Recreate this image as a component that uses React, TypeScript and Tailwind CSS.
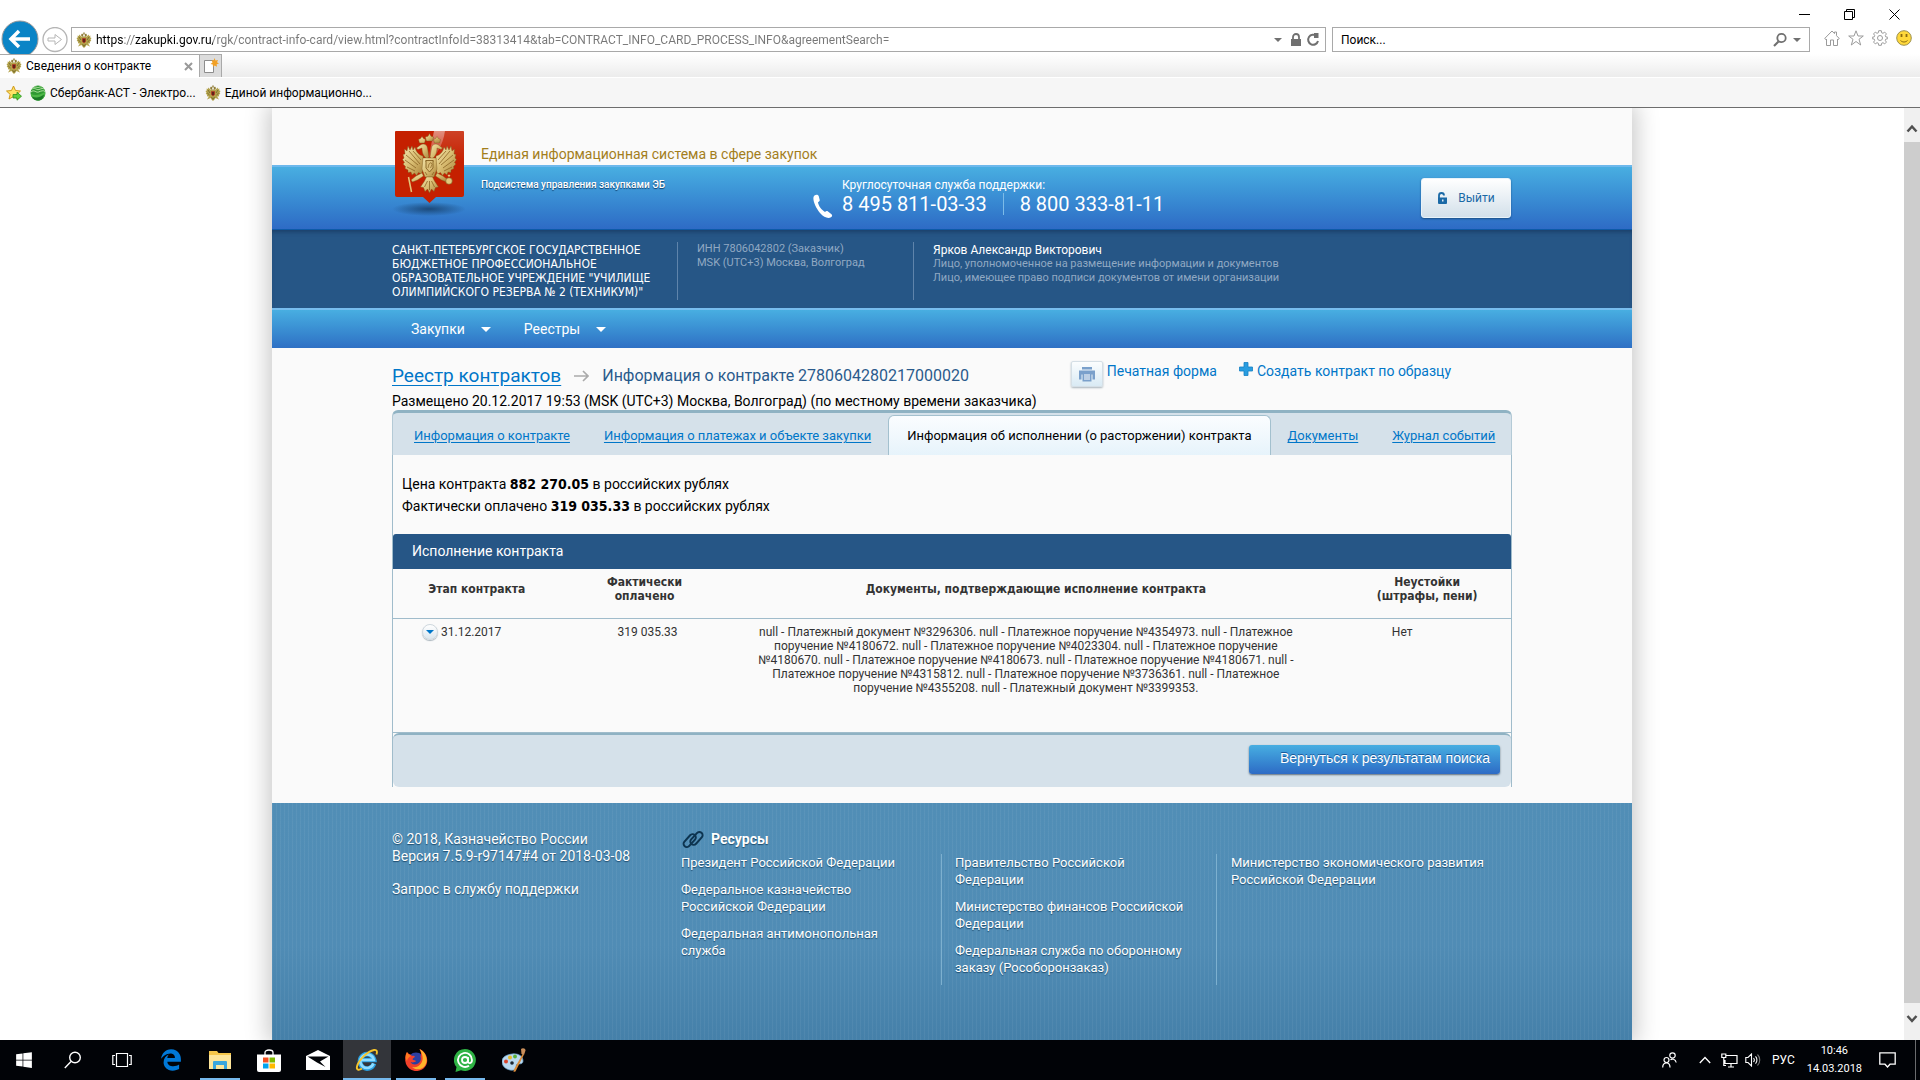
import { ReactNode } from 'react';
import { FaEdgeLegacy, FaWindows } from 'react-icons/fa6';

const PAGE_URL =
  'https://zakupki.gov.ru/rgk/contract-info-card/view.html?contractInfoId=38313414&tab=CONTRACT_INFO_CARD_PROCESS_INFO&agreementSearch=';

const TABS = [
  { label: 'Информация о контракте' },
  { label: 'Информация о платежах и объекте закупки' },
  { label: 'Информация об исполнении (о расторжении) контракта', active: true },
  { label: 'Документы' },
  { label: 'Журнал событий' },
];

const DOCUMENTS =
  'null - Платежный документ №3296306. null - Платежное поручение №4354973. null - Платежное поручение №4180672. null - Платежное поручение №4023304. null - Платежное поручение №4180670. null - Платежное поручение №4180673. null - Платежное поручение №4180671. null - Платежное поручение №4315812. null - Платежное поручение №3736361. null - Платежное поручение №4355208. null - Платежный документ №3399353.';

/* ---------- icons ---------- */

function EagleIcon() {
  return (
    <svg className="w-4 h-4 shrink-0" viewBox="0 0 16 16">
      <path d="M7 4.500C5.500 5 4.500 4 3.500 2.500L2.800 4 1.600 3.500 1.800 5.500.5 6l1 1.700-.8 1 1.500 1-.3 1.500 2 .2L2 14.500l3.500-1.500 1 1.500L8 16l1.500-1.500 1-1.500 3.500 1.500-1.900-3.100 2-.2-.3-1.500 1.500-1-.8-1 1-1.700-1.300-.5.2-2-1.200.5-.7-1.500C11.500 4 10.500 5 9 4.500z" fill="#b3a24b" />
      <path d="M3 5l2 3M2.300 8l2.200 2M13 5l-2 3M13.700 8l-2.200 2M6.500 12L8 14.500 9.500 12" fill="none" stroke="#6d6128" strokeWidth=".8" />
      <path d="M5 3l1-1.500 1.200 1V5L5.500 4zM11 3l-1-1.500-1.200 1V5l1.700-1zM7.300.5h1.400v2H7.300z" fill="#8d7a33" />
      <path d="M6.200 6.200h3.600v3.300L8 11.300 6.200 9.500z" fill="#a8231c" />
      <path d="M7.400 7h1.200v3H7.400z" fill="#2f2519" />
    </svg>
  );
}

function Emblem() {
  return (
    <svg className="absolute left-0 top-[23px] w-[76px] h-[88px]" viewBox="0 0 76 88">
      <defs>
        <radialGradient id="emblemShadow">
          <stop offset="0" stopColor="#17406c" stopOpacity=".85" />
          <stop offset="1" stopColor="#17406c" stopOpacity="0" />
        </radialGradient>
        <linearGradient id="gold" x1="0" y1="0" x2="1" y2="1">
          <stop offset="0" stopColor="#f4e6ae" />
          <stop offset=".5" stopColor="#d9bd72" />
          <stop offset="1" stopColor="#a9823a" />
        </linearGradient>
        <linearGradient id="gloss" x1="0" y1="0" x2="0" y2="1">
          <stop offset="0" stopColor="#fff" stopOpacity=".5" />
          <stop offset="1" stopColor="#fff" stopOpacity="0" />
        </linearGradient>
      </defs>
      <ellipse cx="37" cy="78" rx="37" ry="7" fill="url(#emblemShadow)" />
      <path d="M4 0h67a1 1 0 0 1 1 1v63a2 2 0 0 1-2 2H44l-6.500 6L31 66H5a2 2 0 0 1-2-2V1a1 1 0 0 1 1-1z" fill="#c52000" />
      <path d="M53 0h18a1 1 0 0 1 1 1v30H42C47 22 51 12 53 0z" fill="url(#gloss)" opacity=".3" />
      <path d="M42 0h11c-2 14-8 24-18 34z" fill="url(#gloss)" />
      <g fill="url(#gold)" stroke="#7a5518" strokeWidth=".4">
        {/* wings */}
        <path d="M31 25c-4-1-7-4-8-9l-2 3-1-4-2 4-2-4-1 5-2.500-2 .5 5-2 .5 1 3.500-1.500 1.500 2 3-1.500 1.500 2.500 2.500-.5 2 3 1.500v2.500l3-.5 1 3 2.500-2 2 2.500 2-3 3 1.500 2-6z" />
        <path d="M44 25c4-1 7-4 8-9l2 3 1-4 2 4 2-4 1 5 2.500-2-.5 5 2 .5-1 3.500 1.500 1.500-2 3 1.500 1.500-2.500 2.500.5 2-3 1.500v2.500l-3-.5-1 3-2.500-2-2 2.500-2-3-3 1.500-2-6z" />
        {/* necks and heads */}
        <path d="M35 28c-4-3-5-7-5-11l-4 1.500-1.500-1.500 4-3c3-2 6.500-.5 7 3l1.500 9z" />
        <path d="M40 28c4-3 5-7 5-11l4 1.500 1.500-1.500-4-3c-3-2-6.500-.5-7 3l-1.500 9z" />
        {/* crowns */}
        <path d="M27.500 12l-1-3.500 2-1L30 5.500l1.500 2 2 1-1 3.500zM42.500 12l-1-3.500 2-1L45 5.500l1.500 2 2 1-1 3.500z" />
        <path d="M34.500 10l-1.200-4 2.700-.8L37.500 2.500 39 5.200l2.700.8-1.200 4z" />
        {/* body, tail and claws */}
        <path d="M31 27h13l1 11-3 8h-9l-3-8z" />
        <path d="M34.500 46h6l2 4 4 6-3 .5-1.500 4-2.500-2.500-2 4-2-4-2.500 2.500-1.500-4-3-.5 4-6z" />
        <path d="M30 42l-6 3-5 4 1.500 2 5-2 6-4zM45 42l6 3 5 4-1.500 2-5-2-6-4z" />
      </g>
      <path d="M16.500 46l3 15" stroke="#e2c77c" strokeWidth="1.500" />
      <circle cx="57" cy="50" r="3.300" fill="#e3c77d" stroke="#7a5518" strokeWidth=".6" />
      <path d="M57 46v-2.500M55.800 44.500h2.400" stroke="#e3c77d" />
      <path d="M14 24l12 10M13 29l11 8M15 36l8 4M17 20l11 13M21 20l8 9M61 24L49 34M62 29l-11 8M60 36l-8 4M58 20L47 33M54 20l-8 9M35.500 50l-3 6M37.500 50v9M39.500 50l3 6M33 30h9M33 41l2 3M42 41l-2 3" stroke="#8a6424" strokeWidth=".8" />
      <path d="M34 29.500h7v7.500l-3.500 4-3.500-4z" fill="#dcc07a" stroke="#7a5518" strokeWidth=".8" />
      <path d="M36 37l1-4 2-1.500 1 2-1.500 3.500" fill="none" stroke="#8a6424" strokeWidth=".7" />
    </svg>
  );
}

function MagnifierIcon() {
  return (
    <svg className="w-4 h-4" viewBox="0 0 16 16" fill="none" stroke="currentColor">
      <circle cx="9.500" cy="6" r="4.200" strokeWidth="1.800" />
      <path d="M6.500 9.500L2 14" strokeWidth="2.200" />
    </svg>
  );
}

function Caret({ className }: { className: string }) {
  return (
    <svg className={className} viewBox="0 0 10 5">
      <path d="M0 0h10L5 5z" fill="currentColor" />
    </svg>
  );
}

function ChevronIcon({ down = false }: { down?: boolean }) {
  return (
    <svg className="w-3 h-3" viewBox="0 0 12 12" fill="none" stroke="#505050" strokeWidth="2.500">
      <path d={down ? 'M1.500 3L6 8l4.500-5' : 'M1.500 8.500L6 3.500l4.500 5'} />
    </svg>
  );
}

/* ---------- browser chrome ---------- */

function BrowserChrome() {
  return (
    <header className="shrink-0 bg-white text-black text-xs">
      <div className="h-[27px] flex justify-end items-center pr-5 pt-[2px] gap-[34px]">
        <button aria-label="Свернуть">
          <svg className="w-[11px] h-[11px]" viewBox="0 0 11 11"><path d="M0 5.500h11" stroke="#000" /></svg>
        </button>
        <button aria-label="Восстановить">
          <svg className="w-[11px] h-[11px]" viewBox="0 0 11 11" fill="none" stroke="#000">
            <path d="M.5 2.500h8v8h-8zM2.500 2.500v-2h8v8h-2" />
          </svg>
        </button>
        <button aria-label="Закрыть">
          <svg className="w-[11px] h-[11px]" viewBox="0 0 11 11"><path d="M.5.5l10 10M10.500.5l-10 10" stroke="#000" /></svg>
        </button>
      </div>

      {/* Address row */}
      <div className="h-[27px] flex items-start pr-2">
        <button aria-label="Назад" className="relative w-[42px] h-[27px]">
          <svg className="absolute left-[1px] -top-[7px] w-[38px] h-[38px]" viewBox="0 0 38 38">
            <circle cx="19" cy="19" r="18" fill="#0a84c6" stroke="#9a9a9a" />
            <path d="M29 19H11M18 11l-8 8 8 8" fill="none" stroke="#fff" strokeWidth="3.500" />
          </svg>
        </button>
        <button aria-label="Вперед" className="w-[29px]">
          <svg className="w-[26px] h-[26px]" viewBox="0 0 26 26" fill="none" stroke="#b5b5b5">
            <circle cx="13" cy="12.500" r="12" strokeWidth="1.300" />
            <path d="M6 11h7V7.500l6.500 5-6.500 5V14H6z" />
          </svg>
        </button>
        <div className="flex-1 h-[25px] flex items-center border border-[#a9a9a9] px-1 text-[#707070]">
          <EagleIcon />
          <input
            aria-label="Адрес"
            readOnly
            value={PAGE_URL}
            className="flex-1 ml-1 min-w-0 outline-none bg-clip-text text-transparent bg-[linear-gradient(90deg,#000_27px,#777_27px,#777_38px,#000_38px,#000_117px,#777_117px)]"
          />
          <Caret className="w-2 h-1 mr-2" />
          <svg className="w-3 h-4" viewBox="0 0 12 16">
            <path d="M3 7V5a3 3 0 0 1 6 0v2" fill="none" stroke="#707070" strokeWidth="1.800" />
            <path d="M1 7h10v7H1z" fill="#707070" />
          </svg>
          <button aria-label="Обновить" className="ml-[3px]">
            <svg className="w-4 h-4" viewBox="0 0 16 16" fill="none" stroke="#707070" strokeWidth="2">
              <path d="M11.500 4A5 5 0 1 0 13 9" />
              <path d="M9 1h4.500v5H9z" fill="#707070" stroke="none" />
            </svg>
          </button>
        </div>
        <div className="w-1/4 ml-[6px] mr-[14px] h-[25px] flex items-center border border-[#a9a9a9] px-2 text-[#707070]">
          <input aria-label="Поиск" className="flex-1 min-w-0 outline-none text-black" defaultValue="Поиск..." />
          <MagnifierIcon />
          <Caret className="ml-[5px] w-2 h-1" />
        </div>
        <div className="flex gap-2 pt-[3px] text-[#9b9b9b]">
          <svg className="w-4 h-4" viewBox="0 0 16 16" fill="none" stroke="currentColor">
            <path d="M.7 8.500L8 1l2.500 2.600V2h2v3.700l2.800 2.800-1.300 1-.5-.5v6.500H9.500V10h-3v5.500h-4V9l-.5.500z" />
          </svg>
          <svg className="w-4 h-4" viewBox="0 0 16 16" fill="none" stroke="currentColor">
            <path d="M8 .8l2 5.200h5.300L11 9.300l1.700 5.700L8 11.500 3.300 15 5 9.300.7 6H6z" />
          </svg>
          <svg className="w-4 h-4" viewBox="0 0 16 16" fill="none" stroke="currentColor">
            <path d="M6.700.7h2.600l.3 2 1.400.6 1.700-1.200 1.700 1.800-1.100 1.700.5 1.300 2 .4v1.400l-2 .4-.5 1.300 1.100 1.700-1.700 1.800-1.700-1.200-1.400.6-.3 2H6.700l-.3-2-1.400-.6-1.700 1.200-1.700-1.800 1.100-1.700-.5-1.300-2-.4V7.300l2-.4.5-1.300L1.600 3.900l1.700-1.800L5 3.300l1.400-.6z" />
            <circle cx="8" cy="8" r="2.500" />
          </svg>
          <svg className="w-4 h-4" viewBox="0 0 16 16">
            <circle cx="8" cy="8" r="7.300" fill="#ffd83b" stroke="#9d9150" />
            <path d="M5.500 4v3M10.500 4v3" stroke="#8a6a10" strokeWidth="1.800" />
            <path d="M4.500 10.500c2 2 5 2 7 0" fill="none" stroke="#8a6a10" />
          </svg>
        </div>
      </div>

      {/* Tab strip */}
      <div className="relative h-[23px] flex bg-gradient-to-b from-white to-[#ececec]">
        <div className="w-[200px] flex items-center border-t border-r border-[#a9a9a9] bg-white px-[6px]">
          <EagleIcon />
          <span className="ml-1 flex-1">Сведения о контракте</span>
          <button aria-label="Закрыть вкладку">
            <svg className="w-[9px] h-[9px]" viewBox="0 0 9 9"><path d="M1 1l7 7M8 1L1 8" stroke="#999" strokeWidth="2" /></svg>
          </button>
        </div>
        <button aria-label="Новая вкладка" className="w-[22px] flex items-center justify-center border-t border-r border-[#a9a9a9] bg-[#dcdcdc]">
          <svg className="w-4 h-4" viewBox="0 0 16 16">
            <path d="M1.500 2.500h9v12h-9z" fill="#fff" stroke="#8d8d8d" />
            <path d="M11.500 0l1 2.500L15 2l-1 2.300 2 1.200-2.400.8.4 2.500-2.300-1.300L10 9l-.2-2.500L7.500 6l2-1.500L8.500 2l2.200.5z" fill="#f2a024" />
          </svg>
        </button>
      </div>

      {/* Favourites bar */}
      <div className="h-[31px] flex items-center bg-[#f6f6f6] border-t border-b border-t-white border-b-[#6d6d6d] pl-[6px]">
        <svg className="w-4 h-4" viewBox="0 0 16 16">
          <path d="M7.500 1l2 4.500 5 .5-3.700 3.400L12 14l-4.500-2.500L3 14l1.200-4.600L.5 6l5-.5z" fill="#ffe266" stroke="#cf9a1a" />
          <path d="M7 9.500h4V7.200l4.500 4-4.500 4V13H7z" fill="#5fcf3c" stroke="#2c8f1a" strokeWidth=".8" />
        </svg>
        <svg className="ml-2 w-4 h-4" viewBox="0 0 16 16">
          <circle cx="8" cy="8" r="7.500" fill="#2f9a33" />
          <path d="M1.500 4.500c3-3 5 1 7.500 0s4-1.500 5-.5M1 7c3-3 5 1 7.500 0s5-2 6.500-.5M3.500 2.500c2-1.500 3.500.5 5 0s2.500-1 3.500-.5" fill="none" stroke="#bfe8ae" strokeWidth=".9" />
          <path d="M1 9c4 2 9 1 14-2 .3 5-2.500 8.500-7 8.500S1 12 1 9z" fill="#4db848" />
          <path d="M2 11.500c4 2 8 1 12-2-.5 4-3 6-6 6s-5-1.500-6-4z" fill="#1a7a26" />
        </svg>
        <a href="#sber" className="ml-1">Сбербанк-АСТ - Электро...</a>
        <span className="ml-[9px]"><EagleIcon /></span>
        <a href="#eis" className="ml-1">Единой информационно...</a>
      </div>
    </header>
  );
}

/* ---------- site header ---------- */

function SiteHeader() {
  return (
    <header>
      <div className="relative max-w-[1120px] mx-auto z-10">
        <Emblem />
        <p className="h-[57px] pl-[89px] pt-[36px] text-sm text-[#a37e1c]">Единая информационная система в сфере закупок</p>
      </div>

      <div className="h-[65px] border-t-2 border-t-[#6db8ec] border-b border-b-[#0d5aa8] bg-gradient-to-b from-[#48aee1] to-[#2e6bc5] text-white">
        <div className="max-w-[1120px] mx-auto grid grid-cols-[421px_1fr_auto] pt-[11px] pr-[1px] leading-4">
          <p className="pl-[89px] text-[10px] leading-[14px] font-medium [text-shadow:0_1px_1px_#0f3e6b]">Подсистема управления закупками ЭБ</p>
          <div className="flex items-start gap-[9px]">
            <svg className="self-end w-5 h-6" viewBox="0 0 20 24">
              <path d="M1.500 1.500C3 .3 5 .5 5.700 2l1 4c.2 1-.4 1.700-1.700 2.300C5.500 12 8.500 16 12 18c1-.9 2-1.200 3-.5l3.500 2.700c1 .9.800 2.300-.5 3.100-3 1.500-7 .2-11-4.300C2 13-1.500 4 1.500 1.500z" fill="#fff" />
            </svg>
            <div>
              <p className="text-xs leading-[14px]">Круглосуточная служба поддержки:</p>
              <p className="flex items-center text-xl leading-6">
                8 495 811-03-33
                <span className="mx-4 w-px h-[22px] bg-[#7cbbe8]" />
                8 800 333-81-11
              </p>
            </div>
          </div>
          <button className="w-[90px] h-10 flex items-center justify-center gap-[10px] rounded-[3px] border border-[#e9f3f9] bg-gradient-to-b from-white to-[#d3e0ea] text-xs text-[#1a69a6] shadow-[0_1px_2px_#1a4f86]">
            <svg className="w-[11px] h-3" viewBox="0 0 11 12">
              <path d="M2 6V3.500a2.500 2.500 0 0 1 5 0" fill="none" stroke="#1a69a6" strokeWidth="1.800" />
              <path d="M1 5.500h9V11a1 1 0 0 1-1 1H2a1 1 0 0 1-1-1z" fill="#1a69a6" />
              <path d="M5 7.500h1.500v2H5z" fill="#dfe9f1" />
            </svg>
            Выйти
          </button>
        </div>
      </div>

      <div className="bg-[#265686] pt-3 pb-2 shadow-[inset_0_4px_4px_-2px_#1b3f68]">
        <div className="max-w-[1120px] mx-auto grid grid-cols-[285px_236px_1fr] min-h-[58px] text-[11px] leading-[14px] text-[#91a9c3]">
          <p className="pr-5 pt-px font-['DejaVu_Sans_Condensed','DejaVu_Sans',sans-serif] text-xs leading-[14px] text-white">
            САНКТ-ПЕТЕРБУРГСКОЕ ГОСУДАРСТВЕННОЕ БЮДЖЕТНОЕ ПРОФЕССИОНАЛЬНОЕ ОБРАЗОВАТЕЛЬНОЕ УЧРЕЖДЕНИЕ "УЧИЛИЩЕ ОЛИМПИЙСКОГО РЕЗЕРВА № 2 (ТЕХНИКУМ)"
          </p>
          <div className="border-l border-[#5f84ab] pl-[19px]">
            <p>ИНН 7806042802 (Заказчик)</p>
            <p>MSK (UTC+3) Москва, Волгоград</p>
          </div>
          <div className="border-l border-[#5f84ab] pl-[19px] pt-px">
            <p className="text-xs leading-[14px] text-white">Ярков Александр Викторович</p>
            <p>Лицо, уполномоченное на размещение информации и документов</p>
            <p>Лицо, имеющее право подписи документов от имени организации</p>
          </div>
        </div>
      </div>

      <nav className="border-t-2 border-[#78bdee] bg-gradient-to-b from-[#48aee1] to-[#2f70c4]">
        <div className="max-w-[1120px] mx-auto flex gap-[33px] pl-[19px] text-sm leading-[38px] text-white">
          {['Закупки', 'Реестры'].map((item) => (
            <button key={item} className="flex items-center gap-4">
              {item}
              <Caret className="w-[10px] h-[5px]" />
            </button>
          ))}
        </div>
      </nav>
    </header>
  );
}

/* ---------- contract card ---------- */

function ContractCard() {
  return (
    <main className="max-w-[1120px] w-full mx-auto pt-[13px] pb-4 text-sm text-black">
      <div className="flex items-start">
        <h1 className="flex items-center pt-[3px] text-base leading-6 text-[#2a5a8c]">
          <a href="#registry" className="text-[19px] leading-6 text-[#0076c8] underline underline-offset-3">Реестр контрактов</a>
          <svg className="mx-[13px] w-[15px] h-3" viewBox="0 0 15 12" fill="none" stroke="#aaa" strokeWidth="1.600">
            <path d="M0 6h14M9 1l5 5-5 5" />
          </svg>
          Информация о контракте 2780604280217000020
        </h1>
        <div className="ml-auto flex items-start mr-[61px] leading-5">
          <button aria-label="Печать" className="w-8 h-[26px] flex items-center justify-center rounded-[2px] border border-[#d5dfe6] bg-gradient-to-b from-[#fbfdfe] to-[#d9eaf4] shadow-[0_1px_2px_#a9b4bb]">
            <svg className="w-4 h-4" viewBox="0 0 16 16">
              <path d="M3 1h10v2.500H3zM0 4.500h16v9h-2.500v-5h-11v5H0z" fill="#7aa0cb" />
              <path d="M3.500 7.500h9v8h-9z" fill="#7aa0cb" />
              <path d="M5 9h6M5 11h6M5 13h6" stroke="#fff" />
            </svg>
          </button>
          <a href="#print" className="ml-1 text-[#0076c8]">Печатная форма</a>
          <svg className="ml-[22px] mt-px w-[14px] h-[14px]" viewBox="0 0 14 14">
            <path d="M5 .5h4V5h4.500v4H9v4.500H5V9H.5V5H5z" fill="#2a9de0" stroke="#1580c4" strokeWidth=".8" />
          </svg>
          <a href="#clone" className="ml-1 text-[#0076c8]">Создать контракт по образцу</a>
        </div>
      </div>
      <p className="mt-1 leading-[18px]">Размещено 20.12.2017 19:53 (MSK (UTC+3) Москва, Волгоград) (по местному времени заказчика)</p>

      <nav className="flex whitespace-nowrap pl-1 pt-[2px] border-t-3 border-x border-t-[#8fb2c3] border-x-[#b4cad6] rounded-t-md bg-[#d5e1ea] text-[13px] leading-10">
        {TABS.map((tab) =>
          tab.active ? (
            <a key={tab.label} href="#tab" className="px-[18px] -mb-px border border-b-0 border-[#a3c0ce] rounded-t-md bg-gradient-to-b from-[#fbfdff] to-[#e6f3fb]">
              {tab.label}
            </a>
          ) : (
            <a key={tab.label} href="#tab" className="px-[17px] -mb-px border-t border-transparent text-[#0076c8] underline underline-offset-2">{tab.label}</a>
          ),
        )}
      </nav>

      <section className="relative border-x border-[#a0bccb] bg-[#fafafa]">
        <div className="px-[9px] pt-[18px] pb-[17px] leading-[22px]">
          <p>Цена контракта <Amount>882 270.05</Amount> в российских рублях</p>
          <p>Фактически оплачено <Amount>319 035.33</Amount> в российских рублях</p>
        </div>

        <h2 className="pl-[19px] leading-[35px] rounded-t-[3px] bg-[#265686] text-white">Исполнение контракта</h2>
        <table className="w-full table-fixed text-xs leading-[14px] text-[#333]">
          <colgroup>
            <col className="w-[15%]" />
            <col className="w-[15%]" />
            <col />
            <col className="w-[15%]" />
          </colgroup>
          <thead className="font-['DejaVu_Sans_Condensed','DejaVu_Sans',sans-serif]">
            <tr className="border-b border-[#a0bccb]">
              <th className="pt-[6px] pb-[15px]">Этап контракта</th>
              <th className="pt-[6px] pb-[15px]">Фактически<br />оплачено</th>
              <th className="pt-[6px] pb-[15px]">Документы, подтверждающие исполнение контракта</th>
              <th className="pt-[6px] pb-[15px]">Неустойки<br />(штрафы, пени)</th>
            </tr>
          </thead>
          <tbody>
            <tr className="border-b border-[#a0bccb] align-top text-center">
              <td className="pl-[29px] pt-[5px]">
                <div className="flex items-center gap-[3px]">
                  <button aria-label="Развернуть" className="w-4 h-4 flex items-center justify-center rounded-full border border-[#cfd8de] bg-gradient-to-b from-white to-[#dbe6ee] text-[#0076c8] shadow-[0_1px_1px_#a8b4bc]">
                    <Caret className="w-2 h-1" />
                  </button>
                  31.12.2017
                </div>
              </td>
              <td className="pt-[6px] pl-[6px]">319 035.33</td>
              <td className="pt-[6px] pb-[37px] pl-5 pr-10">{DOCUMENTS}</td>
              <td className="pt-[6px] pr-[50px]">Нет</td>
            </tr>
          </tbody>
        </table>

        <div className="flex justify-end pt-[10px] pb-[13px] pr-[11px] border-t-2 border-[#8fb2c3] rounded-md bg-[#d5e1ea]">
          <button className="h-[29px] pl-[31px] pr-[10px] pb-[3px] rounded-[3px] bg-gradient-to-b from-[#48aee1] to-[#2e6bc5] font-['Liberation_Sans',Arial,sans-serif] text-white [text-shadow:0_-1px_0_#1c5a9a] shadow-[0_1px_2px_#5f6f7c]">
            Вернуться к результатам поиска
          </button>
        </div>
      </section>
    </main>
  );
}

function Amount({ children }: { children: ReactNode }) {
  return <b className="font-['DejaVu_Sans_Condensed','DejaVu_Sans',sans-serif]">{children}</b>;
}

/* ---------- site footer ---------- */

function FooterLink({ children }: { children: ReactNode }) {
  return <li><a href="#resource">{children}</a></li>;
}

function SiteFooter() {
  return (
    <footer className="flex-1 bg-[repeating-linear-gradient(90deg,rgba(255,255,255,0.05)_0,rgba(255,255,255,0.05)_1px,transparent_1px,transparent_4px),linear-gradient(#518eb6,#508cb5_60%,#4580a9)] text-white [text-shadow:0_1px_1px_#1d4c6e]">
      <div className="max-w-[1120px] mx-auto pt-7 grid grid-cols-[289px_1fr] text-sm leading-[17px]">
        <div>
          <p>© 2018, Казначейство России</p>
          <p>Версия 7.5.9-r97147#4 от 2018-03-08</p>
          <p className="mt-4"><a href="#support">Запрос в службу поддержки</a></p>
        </div>
        <div>
          <h3 className="flex items-center gap-[6px] font-bold leading-[17px]">
            <svg className="w-6 h-[17px]" viewBox="0 0 24 17" fill="none" stroke="#0d3450" strokeWidth="2">
              <rect x="0" y="0" width="15" height="6.500" rx="3.250" transform="translate(11 13.500) rotate(-48) translate(0 -4)" />
              <rect x="0" y="0" width="15" height="6.500" rx="3.250" transform="translate(3.500 15) rotate(-48) translate(0 -3)" />
            </svg>
            Ресурсы
          </h3>
          <div className="mt-[6px] grid grid-cols-[260px_275px_1fr] text-[13px] leading-[17px]">
            <ul className="space-y-[10px] pr-[30px]">
              <FooterLink>Президент Российской Федерации</FooterLink>
              <FooterLink>Федеральное казначейство Российской Федерации</FooterLink>
              <FooterLink>Федеральная антимонопольная служба</FooterLink>
            </ul>
            <ul className="space-y-[10px] pb-[9px] border-l border-[#7db0cf] pl-[13px] pr-[23px]">
              <FooterLink>Правительство Российской Федерации</FooterLink>
              <FooterLink>Министерство финансов Российской Федерации</FooterLink>
              <FooterLink>Федеральная служба по оборонному заказу (Рособоронзаказ)</FooterLink>
            </ul>
            <ul className="border-l border-[#7db0cf] pl-[14px]">
              <FooterLink>Министерство экономического развития Российской Федерации</FooterLink>
            </ul>
          </div>
        </div>
      </div>
    </footer>
  );
}

/* ---------- taskbar ---------- */

function TaskButton({ label, open = false, active = false, children }: { label: string; open?: boolean; active?: boolean; children: ReactNode }) {
  return (
    <button aria-label={label} className={`w-12 h-10 flex flex-col items-center ${active ? 'bg-[#33353a]' : ''}`}>
      <span className="flex-1 flex items-center">{children}</span>
      <span className={`h-[2px] -mt-[2px] ${active ? 'w-12 bg-[#76b9ed]' : open ? 'w-10 bg-[#76b9ed]' : 'w-10'}`} />
    </button>
  );
}

function Taskbar() {
  return (
    <footer className="shrink-0 h-10 flex items-center bg-[#010307] text-white text-[11px]">
      <div className="flex gap-px">
        <TaskButton label="Пуск"><FaWindows className="w-4 h-[18px]" /></TaskButton>
        <TaskButton label="Поиск">
          <svg className="w-[18px] h-[18px]" viewBox="0 0 18 18" fill="none" stroke="#fff" strokeWidth="1.400">
            <circle cx="11" cy="6.500" r="5.300" />
            <path d="M7 10.500L.8 17" />
          </svg>
        </TaskButton>
        <TaskButton label="Представление задач">
          <svg className="w-5 h-4" viewBox="0 0 20 16" fill="none" stroke="#fff" strokeWidth="1.200">
            <path d="M4.500 1.500h11v13h-11zM3 3.500H.8v9H3M17 3.500h2.200v9H17" />
          </svg>
        </TaskButton>
        <TaskButton label="Edge"><FaEdgeLegacy className="w-[22px] h-[22px] text-[#0078d7]" /></TaskButton>
        <TaskButton label="Проводник" open>
          <svg className="w-[22px] h-[18px]" viewBox="0 0 22 18">
            <path d="M0 0h8l1.500 2H22v16H0z" fill="#f5c64a" />
            <path d="M0 4h22v14H0z" fill="#fde59a" />
            <path d="M4 18v-7a1 1 0 0 1 1-1h12a1 1 0 0 1 1 1v7h-3v-4H7v4z" fill="#3aa6dc" />
          </svg>
        </TaskButton>
        <TaskButton label="Магазин">
          <svg className="w-6 h-[23px]" viewBox="0 0 24 23">
            <path d="M8 6V3.500C8 2 9.500 1 12 1s4 1 4 2.500V6" fill="none" stroke="#fff" strokeWidth="1.300" />
            <path d="M0 5.500h24V21a2 2 0 0 1-2 2H2a2 2 0 0 1-2-2z" fill="#fff" />
            <path d="M6 8.500h5.500v5H6z" fill="#f25022" />
            <path d="M12.500 8.500H18v5h-5.500z" fill="#7fba00" />
            <path d="M6 14.500h5.500v5H6z" fill="#00a4ef" />
            <path d="M12.500 14.500H18v5h-5.500z" fill="#ffb900" />
          </svg>
        </TaskButton>
        <TaskButton label="Почта">
          <svg className="w-6 h-5" viewBox="0 0 24 20">
            <path d="M12 0l12 6v14H0V6z" fill="#fff" />
            <path d="M1.500 6.500h21L14 11.500l5.500 5.500L11 12.500z" fill="#010307" />
          </svg>
        </TaskButton>
        <TaskButton label="Internet Explorer" active>
          <svg className="w-6 h-6" viewBox="0 0 24 24" fill="none">
            <path d="M19 15.500A7.200 7.200 0 1 1 19.200 12H6" stroke="#2a9fe0" strokeWidth="4.600" />
            <path d="M18.500 15.500A6.800 6.800 0 1 1 18.800 12H6.500" stroke="#8fdcff" strokeWidth="2.600" />
            <path d="M21.500 6.500c1-3 .5-5-2.500-4.500C13 3 3.500 12 2 18.500c-.8 3.500 1.500 4 5 2.200" stroke="#f6c42a" strokeWidth="1.900" />
          </svg>
        </TaskButton>
        <TaskButton label="Firefox" open>
          <svg className="w-6 h-6" viewBox="0 0 24 24">
            <circle cx="12" cy="13" r="8.500" fill="#2b3fa0" />
            <path d="M3 4c-2 3-2.500 8-1 12 2 5 7 7.500 11.500 7 6-.7 10-5.500 9.700-11C23 7 20 3 15.500 1c1.500 2.500 2 5 1 7.500 1.500 4-1.500 8-5.500 8-2 0-3.500-.8-4.500-2.500 2.500 1 4 .2 5.500-.7-.6-1.300-2.500-1-3.500-1.800 0-1 1.500-2 2.500-2.800-.7-1-2-1-3-.7C6.500 5.500 4 6.500 3 4z" fill="#f2402a" />
            <path d="M15.500 1c3 5 4.500 10 1.500 14.500-2 3-5.500 4.500-9 3.500 3.500 3.500 9.500 3 12.700-1C25 12.500 22 4 15.500 1z" fill="#ffb32a" />
            <path d="M3 4c-2 4-1.500 7 0 9 .5-2.500 2-4 4-5C5.500 7 4 6 3 4z" fill="#ff7a1f" />
          </svg>
        </TaskButton>
        <TaskButton label="Агент" open>
          <svg className="w-[22px] h-[23px]" viewBox="0 0 22 23">
            <path d="M11 0a11 11 0 1 1-4 21.300L1.500 23l1-5A11 11 0 0 1 11 0z" fill="#2fb344" />
            <circle cx="11" cy="11" r="3" fill="none" stroke="#fff" strokeWidth="1.800" />
            <path d="M14 8v4.500c0 2.500 4 2.200 4-1.500a7 7 0 1 0-3 5.700" fill="none" stroke="#fff" strokeWidth="1.800" />
          </svg>
        </TaskButton>
        <TaskButton label="Paint">
          <svg className="w-6 h-6" viewBox="0 0 24 24">
            <path d="M10 6c6-1 11 2 11 7 0 3-3 3-5 3s-2 2-2 4-3 2.500-6 2c-5-1-8-4.500-8-8.500C0 9 4.500 6.700 10 6z" fill="#b9d9f0" stroke="#6da3cc" strokeWidth=".7" />
            <circle cx="4" cy="13.500" r="2" fill="#d8452c" />
            <circle cx="8" cy="9.500" r="2" fill="#e8b92c" />
            <circle cx="13" cy="8.500" r="1.900" fill="#58b03a" />
            <circle cx="10" cy="15" r="1.800" fill="#1b2733" />
            <path d="M20.500 6l1.500.5-8.500 17-2 .5.5-2.500z" fill="#d98b3a" />
            <path d="M19 1c1.500-1.500 4.500-1 4.500 1.500L22 7l-2.500-1z" fill="#c98e5a" />
          </svg>
        </TaskButton>
      </div>

      <div className="ml-auto flex items-center h-full">
        <svg className="w-[15px] h-4" viewBox="0 0 15 16" fill="none" stroke="#fff" strokeWidth="1.200">
          <circle cx="10.500" cy="3.500" r="2.700" />
          <circle cx="4.500" cy="8" r="2.500" />
          <path d="M.7 15.500c0-3 1.500-4.500 3.800-4.500S8 12.500 8 15.500M8.500 8c1-1.300 5-1.500 5.700 2.500" />
        </svg>
        <svg className="ml-[22px] w-3 h-3" viewBox="0 0 12 12" fill="none" stroke="#fff" strokeWidth="1.300"><path d="M.8 9L6 3.500 11.200 9" /></svg>
        <svg className="ml-[10px] w-[17px] h-[15px]" viewBox="0 0 17 15" fill="none" stroke="#fff" strokeWidth="1.200">
          <path d="M5 2.500h11v8H4V7M10 10.500V14M7 14h6M.8 1h4v3.500h-4zM2.800 4.500v8H5" />
        </svg>
        <svg className="ml-[7px] w-4 h-[14px]" viewBox="0 0 16 14" fill="none" stroke="#fff" strokeWidth="1.100">
          <path d="M.8 4.500H3L6.500 1v12L3 9.500H.8zM8.500 5c1 1.200 1 2.800 0 4M10.500 3.300c1.900 2 1.900 5.400 0 7.400" />
          <path d="M12.500 1.500c3 3 3 8 0 11" stroke="#777" />
        </svg>
        <span className="ml-[11px] text-xs">РУС</span>
        <div className="ml-3 text-center leading-[18px]">
          <p>10:46</p>
          <p>14.03.2018</p>
        </div>
        <svg className="ml-[17px] w-[17px] h-4" viewBox="0 0 17 16" fill="none" stroke="#fff" strokeWidth="1.300">
          <path d="M.8.8h15.400v11.400H11L8.500 15 6 12.200H.8z" />
        </svg>
        <span className="ml-[19px] mr-1 w-px h-full bg-[#6a6b6d]" />
      </div>
    </footer>
  );
}

export default function App() {
  return (
    <div className="h-screen flex flex-col overflow-hidden bg-white font-[Roboto,'Noto_Sans',sans-serif]">
      <BrowserChrome />
      <div className="flex-1 min-h-0 flex">
        <div className="flex-1 overflow-hidden">
          <div className="max-w-[1360px] min-h-full mx-auto flex flex-col bg-[#fafafa] shadow-[0_0_22px_4px_rgba(0,0,0,0.22)]">
            <SiteHeader />
            <ContractCard />
            <SiteFooter />
          </div>
        </div>
        {/* Scrollbar */}
        <div className="w-4 flex flex-col bg-[#f0f0f0]">
          <span className="h-[34px] flex items-center justify-center pt-2"><ChevronIcon /></span>
          <span className="flex-1 bg-[#cdcdcd]" />
          <span className="h-[37px] flex items-center justify-center pb-[6px]"><ChevronIcon down /></span>
        </div>
      </div>
      <Taskbar />
    </div>
  );
}
